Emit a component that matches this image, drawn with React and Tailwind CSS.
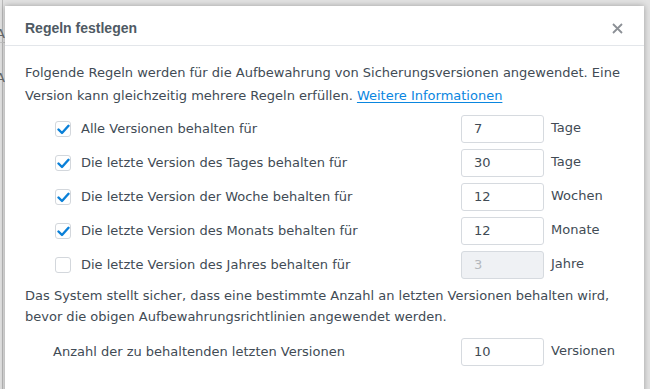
import React from 'react';

const RULES = [
  { label: 'Alle Versionen behalten für', value: '7', unit: 'Tage', checked: true },
  { label: 'Die letzte Version des Tages behalten für', value: '30', unit: 'Tage', checked: true },
  { label: 'Die letzte Version der Woche behalten für', value: '12', unit: 'Wochen', checked: true },
  { label: 'Die letzte Version des Monats behalten für', value: '12', unit: 'Monate', checked: true },
  { label: 'Die letzte Version des Jahres behalten für', value: '3', unit: 'Jahre', checked: false },
];

function Checkbox({ checked }) {
  return (
    <div className="w-4 h-4 shrink-0 rounded-[3px] border border-[#d3d7dc] bg-white flex items-center justify-center">
      {checked && (
        <svg width="13" height="11" viewBox="0 0 13 11" fill="none">
          <path d="M1.5 5.5 L5 9 L11.5 1.8" stroke="#0a80d8" strokeWidth="2.4" strokeLinecap="round" strokeLinejoin="round" />
        </svg>
      )}
    </div>
  );
}

function NumberBox({ value, disabled }) {
  return (
    <div
      className={`w-[83px] h-[28px] shrink-0 rounded-[3px] border border-[#d6dadf] flex items-center pl-[12px] ${
        disabled ? 'bg-[#eff1f4] text-[#b4b8bd]' : 'bg-white text-[#414b55]'
      }`}
    >
      {value}
    </div>
  );
}

export default function App() {
  return (
    <div className="relative w-[650px] h-[389px] overflow-hidden bg-[#e2e2e2] font-['DejaVu_Sans',sans-serif] text-[13px] text-[#414b55]">
      {/* Page behind the dialog */}
      <div className="absolute left-[2px] top-0 bottom-0 w-px bg-[#b9b9b9]" />
      <div className="absolute left-0 top-[42px] w-[8px] h-px bg-[#c4c4c4]" />
      <div className="absolute left-[-4px] top-[24px] text-[#6a6a6a] leading-[20px]">A</div>
      <div className="absolute left-[-4px] top-[70px] text-[#6a6a6a] leading-[15px]">
        A<br />l<br />:
      </div>

      {/* Dialog */}
      <div className="absolute left-[5px] top-[6px] w-[639px] h-[420px] bg-white shadow-[0_0_6px_rgba(0,0,0,0.3)]">
        {/* Header */}
        <div className="h-[40px] border-b border-[#e3e6ea] flex items-center justify-between pl-[20px] pr-[21px] pt-[5px]">
          <span className="font-['Liberation_Sans',sans-serif] font-bold text-[14px] text-[#4f5a64]">Regeln festlegen</span>
          <svg width="11" height="11" viewBox="0 0 11 11">
            <path d="M1 1 L10 10 M10 1 L1 10" stroke="#8c9096" strokeWidth="1.8" />
          </svg>
        </div>

        {/* Body */}
        <div className="pl-[20px] pr-[16px] pt-[15px]">
          <p className="leading-[23px]">
            Folgende Regeln werden für die Aufbewahrung von Sicherungsversionen angewendet. Eine Version kann
            gleichzeitig mehrere Regeln erfüllen.{' '}
            <a href="#" className="text-[#0a86df] underline underline-offset-2">Weitere Informationen</a>
          </p>

          <div className="mt-[5px] pl-[30px]">
            {RULES.map((r) => (
              <div key={r.label} className="h-[34px] flex items-center">
                <div className="w-[406px] flex items-center gap-[10px]">
                  <Checkbox checked={r.checked} />
                  <span>{r.label}</span>
                </div>
                <NumberBox value={r.value} disabled={!r.checked} />
                <span className="ml-[7px] -mt-[3px]">{r.unit}</span>
              </div>
            ))}
          </div>

          <p className="mt-[3px] leading-[21px]">
            Das System stellt sicher, dass eine bestimmte Anzahl an letzten Versionen behalten wird, bevor die
            obigen Aufbewahrungsrichtlinien angewendet werden.
          </p>

          <div className="mt-[11px] pl-[28px] h-[28px] flex items-center">
            <span className="w-[408px]">Anzahl der zu behaltenden letzten Versionen</span>
            <NumberBox value="10" />
            <span className="ml-[7px] -mt-[3px]">Versionen</span>
          </div>
        </div>
      </div>
    </div>
  );
}
